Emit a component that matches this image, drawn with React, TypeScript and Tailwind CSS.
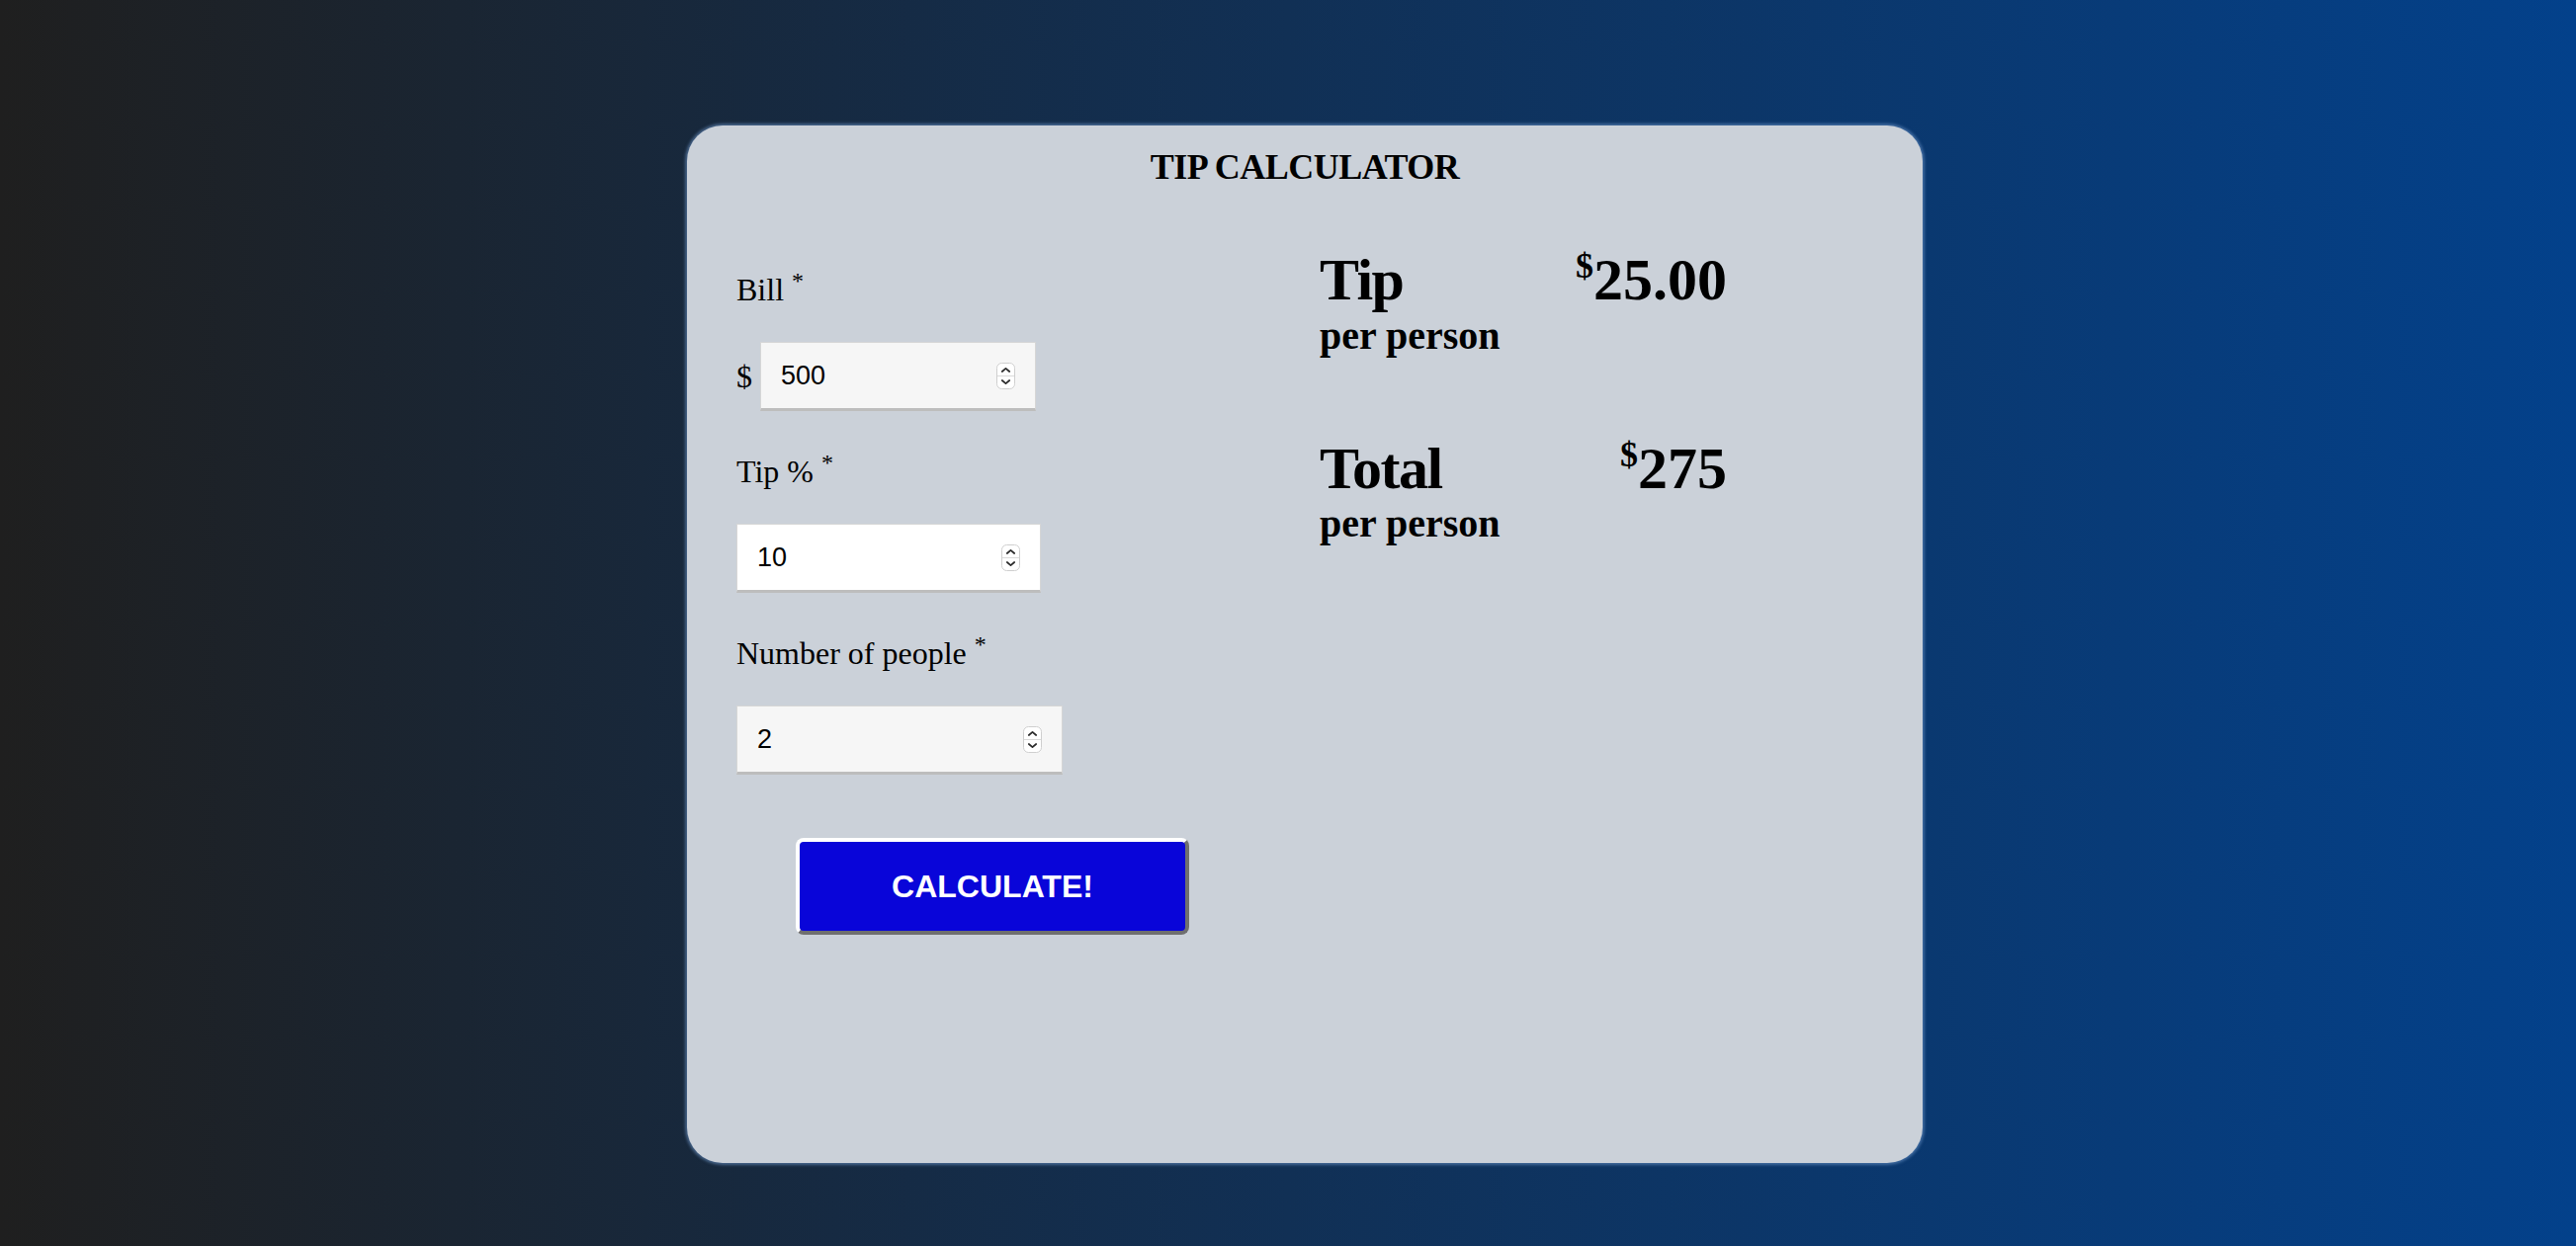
import React from "react";

const serif = { fontFamily: '"Liberation Serif", "Times New Roman", serif' };

function Spinner() {
  return (
    <svg width="19" height="27" viewBox="0 0 19 27" className="shrink-0">
      <rect x="0.5" y="0.5" width="18" height="26" rx="5" fill="#ffffff" stroke="#cfcfcf" />
      <line x1="1" y1="13.5" x2="18" y2="13.5" stroke="#dadada" />
      <path d="M5.8 9 L9.5 5.8 L13.2 9" fill="none" stroke="#2a2a2a" strokeWidth="1.7" strokeLinecap="round" strokeLinejoin="round" />
      <path d="M5.8 18 L9.5 21.2 L13.2 18" fill="none" stroke="#2a2a2a" strokeWidth="1.7" strokeLinecap="round" strokeLinejoin="round" />
    </svg>
  );
}

function NumberBox({ value, widthClass, bgClass }: { value: string; widthClass: string; bgClass: string }) {
  return (
    <div
      className={`${widthClass} ${bgClass} flex h-[70px] items-center border border-[#d6d6d6] border-b-[3px] border-b-[#bdbdbd] pl-[20px] pr-[20px]`}
    >
      <input
        type="text"
        readOnly
        value={value}
        className="min-w-0 flex-1 bg-transparent text-[27px] text-black outline-none"
        style={{ fontFamily: '"Liberation Sans", Arial, sans-serif' }}
      />
      <Spinner />
    </div>
  );
}

export default function App() {
  return (
    <div className="flex h-[1261px] w-full justify-start bg-[linear-gradient(to_right,#1f1f1f,#03418b)] pl-[695px] pt-[127px]">
      <div
        className="h-[1050px] w-[1250px] shrink-0 rounded-[36px] bg-[#cbd1d9] px-[50px] pt-[24px] text-black shadow-[0_0_3px_2px_rgba(110,150,200,0.55)]"
        style={serif}
      >
        <h1 className="text-center text-[36px] font-bold leading-none tracking-[-0.5px]">TIP CALCULATOR</h1>

        <div className="mt-[66px] flex items-start">
          {/* left column */}
          <div className="flex w-[590px] flex-col pt-[24px]">
            <label className="text-[32px] leading-none">
              Bill <sup>*</sup>
            </label>
            <div className="mt-[37px] flex items-center gap-[8px]">
              <span className="text-[32px] leading-none">$</span>
              <NumberBox value="500" widthClass="w-[279px]" bgClass="bg-[#f6f6f6]" />
            </div>

            <label className="mt-[45px] text-[32px] leading-none">
              Tip % <sup>*</sup>
            </label>
            <div className="mt-[37px] flex">
              <NumberBox value="10" widthClass="w-[308px]" bgClass="bg-white" />
            </div>

            <label className="mt-[45px] text-[32px] leading-none">
              Number of people <sup>*</sup>
            </label>
            <div className="mt-[37px] flex">
              <NumberBox value="2" widthClass="w-[330px]" bgClass="bg-[#f6f6f6]" />
            </div>

            <button
              type="button"
              className="ml-[60px] mt-[64px] h-[98px] w-[398px] rounded-[8px] border-[4px] border-t-white border-l-white border-r-[#6f6f6f] border-b-[#6f6f6f] bg-[#0905d9] text-[32px] font-bold leading-none text-white"
              style={{ fontFamily: '"Liberation Sans", Arial, sans-serif' }}
            >
              CALCULATE!
            </button>
          </div>

          {/* right column */}
          <div className="flex w-[412px] flex-col font-bold">
            <div className="flex items-baseline justify-between">
              <span className="text-[60px] leading-none tracking-[-1.5px]">Tip</span>
              <span className="text-[60px] leading-none">
                <sup className="-top-[22px] text-[36px]">$</sup>25.00
              </span>
            </div>
            <div className="mt-[7px] text-[40px] leading-none">per person</div>

            <div className="mt-[84px] flex items-baseline justify-between">
              <span className="text-[60px] leading-none tracking-[-1.5px]">Total</span>
              <span className="text-[60px] leading-none">
                <sup className="-top-[22px] text-[36px]">$</sup>275
              </span>
            </div>
            <div className="mt-[6px] text-[40px] leading-none">per person</div>
          </div>
        </div>
      </div>
    </div>
  );
}
